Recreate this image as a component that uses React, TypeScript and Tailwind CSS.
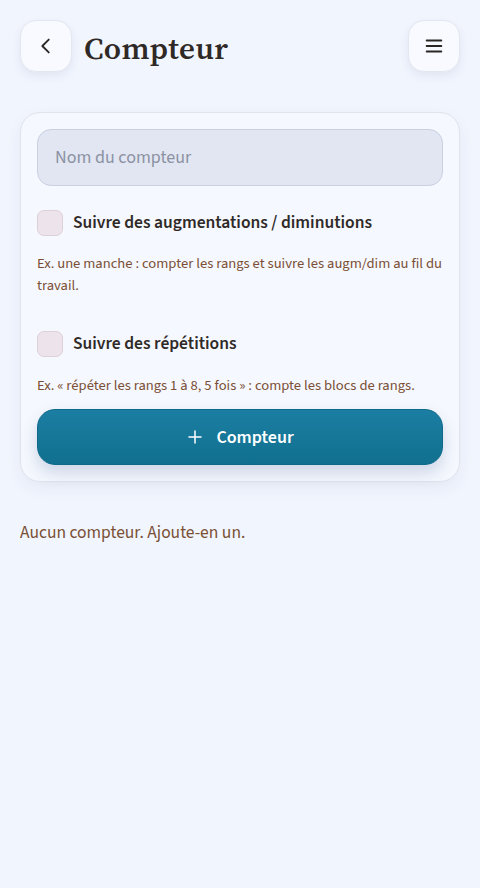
import { useState } from "react";

const sans = { fontFamily: '"Source Sans 3", "Noto Sans", Lato, sans-serif' };

function Checkbox({ checked, onChange }: { checked: boolean; onChange: () => void }) {
    return (
        <button
            type="button"
            onClick={onChange}
            className="w-[26px] h-[26px] shrink-0 rounded-[7px] border border-[#ddd0d8] bg-[#ede3ea]"
        />
    );
}

export default function App() {
    const [nom, setNom] = useState("");
    const [augm, setAugm] = useState(false);
    const [rep, setRep] = useState(false);

    return (
        <div className="min-h-[888px] bg-[#f1f5fe] px-5 pt-5" style={sans}>
            {/* En-tête */}
            <div className="flex items-center h-[52px]">
                <button className="w-[52px] h-[52px] rounded-[16px] bg-[#f8faff] border border-[#e3e7ef] shadow-[0_4px_10px_rgba(40,50,90,0.08)] flex items-center justify-center text-[#2a2624]">
                    <svg width="22" height="22" viewBox="0 0 24 24" fill="none" stroke="currentColor" strokeWidth="2" strokeLinecap="round" strokeLinejoin="round">
                        <path d="M15 5l-7 7 7 7" />
                    </svg>
                </button>
                <h1
                    className="ml-3 mt-1 text-[31px] leading-[40px] font-semibold tracking-[0.4px] text-[#2f2926]"
                    style={{ fontFamily: '"Source Serif 4", "Source Serif Pro", "Liberation Serif", serif' }}
                >
                    Compteur
                </h1>
                <button className="ml-auto w-[52px] h-[52px] rounded-[16px] bg-[#f8faff] border border-[#e3e7ef] shadow-[0_4px_10px_rgba(40,50,90,0.08)] flex items-center justify-center text-[#2a2624]">
                    <svg width="22" height="22" viewBox="0 0 24 24" fill="none" stroke="currentColor" strokeWidth="2" strokeLinecap="round">
                        <path d="M4 6h16M4 12h16M4 18h16" />
                    </svg>
                </button>
            </div>

            {/* Formulaire */}
            <div className="mt-10 rounded-[20px] border border-[#dfe3ec] bg-[#f5f8fe] shadow-[0_6px_16px_rgba(40,50,90,0.06)] p-4">
                <input
                    type="text"
                    placeholder="Nom du compteur"
                    value={nom}
                    onChange={(e) => setNom(e.target.value)}
                    className="w-full h-[57px] rounded-[14px] border border-[#c9d0e0] bg-[#e1e6f2] px-[17px] text-[18px] text-[#2f2926] placeholder:text-[#8c92a2] outline-none"
                />

                <label className="mt-6 flex items-center gap-[10px]">
                    <Checkbox checked={augm} onChange={() => setAugm(!augm)} />
                    <span className="text-[17.5px] leading-[26px] font-semibold text-[#2f2a28]">
                        Suivre des augmentations / diminutions
                    </span>
                </label>
                <p className="mt-[17px] text-[14.6px] leading-[22px] text-[#7a4f35]">
                    Ex. une manche : compter les rangs et suivre les augm/dim au fil du travail.
                </p>

                <label className="mt-[34px] flex items-center gap-[10px]">
                    <Checkbox checked={rep} onChange={() => setRep(!rep)} />
                    <span className="text-[17.5px] leading-[26px] font-semibold text-[#2f2a28]">Suivre des répétitions</span>
                </label>
                <p className="mt-[18px] text-[14.6px] leading-[22px] text-[#7a4f35]">
                    Ex. « répéter les rangs 1 à 8, 5 fois » : compte les blocs de rangs.
                </p>

                <button className="mt-[12px] w-full h-[56px] rounded-[18px] bg-gradient-to-b from-[#1b7ea2] to-[#11708f] border border-[#0f6a8a] text-white text-[18px] font-semibold flex items-center justify-center gap-3 shadow-[0_8px_16px_rgba(30,60,120,0.18)]">
                    <svg width="18" height="18" viewBox="0 0 24 24" fill="none" stroke="currentColor" strokeWidth="2" strokeLinecap="round">
                        <path d="M12 4v16M4 12h16" />
                    </svg>
                    Compteur
                </button>
            </div>

            <p className="mt-[38px] text-[17.5px] text-[#7a5035]">Aucun compteur. Ajoute-en un.</p>
        </div>
    );
}
